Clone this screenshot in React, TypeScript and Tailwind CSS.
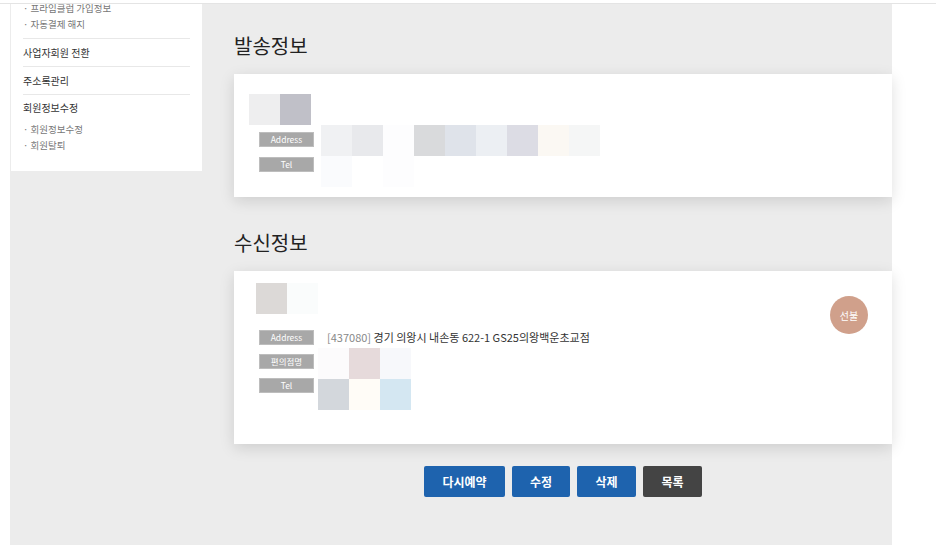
import React from "react";

const font = { fontFamily: '"Noto Sans CJK KR", "Noto Sans", sans-serif' };

function Tile({ c }: { c: string }) {
  return <div className={`h-[31px] w-[31px] ${c}`} />;
}

function Label({ children }: { children: React.ReactNode }) {
  return (
    <div className="flex h-[15px] w-[55px] items-center justify-center border border-[#bdbdbd] bg-[#a8a8a8] text-[8.5px] leading-none text-white">
      {children}
    </div>
  );
}

function Sidebar() {
  return (
    <aside className="-mt-[4px] w-[191px] self-start bg-white px-3 pb-[18px] leading-4">
      <ul className="border-b border-[#e8e8e8] pb-[6px] text-[9.5px] text-[#777]">
        <li className="h-4">· 프라임클럽 가입정보</li>
        <li className="h-4">· 자동결제 해지</li>
      </ul>
      <div className="flex h-[28px] items-center border-b border-[#e8e8e8] text-[10px] text-[#333]">사업자회원 전환</div>
      <div className="flex h-[28px] items-center border-b border-[#e8e8e8] text-[10px] text-[#333]">주소록관리</div>
      <div className="flex h-[26px] items-center text-[10px] text-[#333]">회원정보수정</div>
      <ul className="text-[9.5px] text-[#777]">
        <li className="h-4">· 회원정보수정</li>
        <li className="h-4">· 회원탈퇴</li>
      </ul>
    </aside>
  );
}

export default function App() {
  return (
    <div className="relative min-h-[545px] bg-white" style={font}>
      <div className="absolute left-0 right-0 top-[3px] z-10 h-px bg-[#e4e4e4]" />
      <div className="flex pl-[10px] pt-[4px]">
        <div className="flex min-h-[541px] w-[882px] bg-[#ececec] pl-px">
          <Sidebar />
          <main className="ml-[32px] flex w-[658px] flex-col">
            <h2 className="mt-[28px] h-[42px] text-[20px] leading-[28px] text-[#222]">발송정보</h2>
            <section className="h-[123px] bg-white pl-[15px] pt-5 shadow-[0_4px_14px_rgba(0,0,0,0.13)]">
              <div className="flex">
                <Tile c="bg-[#eeeeef]" />
                <Tile c="bg-[#c0c0c8]" />
              </div>
              <div className="flex">
                <div className="ml-[10px] flex flex-col gap-[10px] pt-[7px]">
                  <Label>Address</Label>
                  <Label>Tel</Label>
                </div>
                <div className="ml-[7px] flex flex-col">
                  <div className="flex">
                    <Tile c="bg-[#f0f1f3]" />
                    <Tile c="bg-[#e8e9ec]" />
                    <Tile c="bg-[#fdfdfe]" />
                    <Tile c="bg-[#d9dadc]" />
                    <Tile c="bg-[#dfe3ea]" />
                    <Tile c="bg-[#eceff3]" />
                    <Tile c="bg-[#dcdce4]" />
                    <Tile c="bg-[#fbf8f3]" />
                    <Tile c="bg-[#f5f6f6]" />
                  </div>
                  <div className="flex">
                    <Tile c="bg-[#fafbfd]" />
                    <Tile c="bg-white" />
                    <Tile c="bg-[#fdfdfe]" />
                  </div>
                </div>
              </div>
            </section>

            <h2 className="mt-[32px] h-[42px] text-[20px] leading-[28px] text-[#222]">수신정보</h2>
            <section className="relative h-[173px] bg-white pl-[22px] pt-[12px] shadow-[0_4px_14px_rgba(0,0,0,0.13)]">
              <div className="flex">
                <Tile c="bg-[#dcd9d7]" />
                <Tile c="bg-[#fafcfc]" />
              </div>
              <div className="mt-[16px] flex">
                <div className="ml-[3px] flex flex-col gap-[9px]">
                  <Label>Address</Label>
                  <Label>편의점명</Label>
                  <Label>Tel</Label>
                </div>
                <div className="ml-[4px] flex flex-col">
                  <p className="h-[18px] pl-[9px] text-[11px] leading-[14px] text-[#333]">
                    <span className="text-[#888]">[437080]</span> 경기 의왕시 내손동 622-1 GS25의왕백운초교점
                  </p>
                  <div className="grid grid-cols-[31px_31px_31px]">
                    <Tile c="bg-[#fcfbfc]" />
                    <Tile c="bg-[#e6dadb]" />
                    <Tile c="bg-[#f7f8fb]" />
                    <Tile c="bg-[#d3d7dc]" />
                    <Tile c="bg-[#fffcf7]" />
                    <Tile c="bg-[#d4e7f2]" />
                  </div>
                </div>
              </div>
              <div className="absolute right-[24px] top-[25px] flex h-[38px] w-[38px] items-center justify-center rounded-full bg-[#d0a08b] text-[10px] text-white">
                선불
              </div>
            </section>

            <div className="mt-[22px] flex justify-center gap-[7px] text-[12px] font-semibold text-white">
              <button className="h-[31px] w-[81px] rounded-[2px] bg-[#1e63ae]">다시예약</button>
              <button className="h-[31px] w-[58px] rounded-[2px] bg-[#1e63ae]">수정</button>
              <button className="h-[31px] w-[59px] rounded-[2px] bg-[#1e63ae]">삭제</button>
              <button className="h-[31px] w-[59px] rounded-[2px] bg-[#444444]">목록</button>
            </div>
          </main>
        </div>
      </div>
    </div>
  );
}
